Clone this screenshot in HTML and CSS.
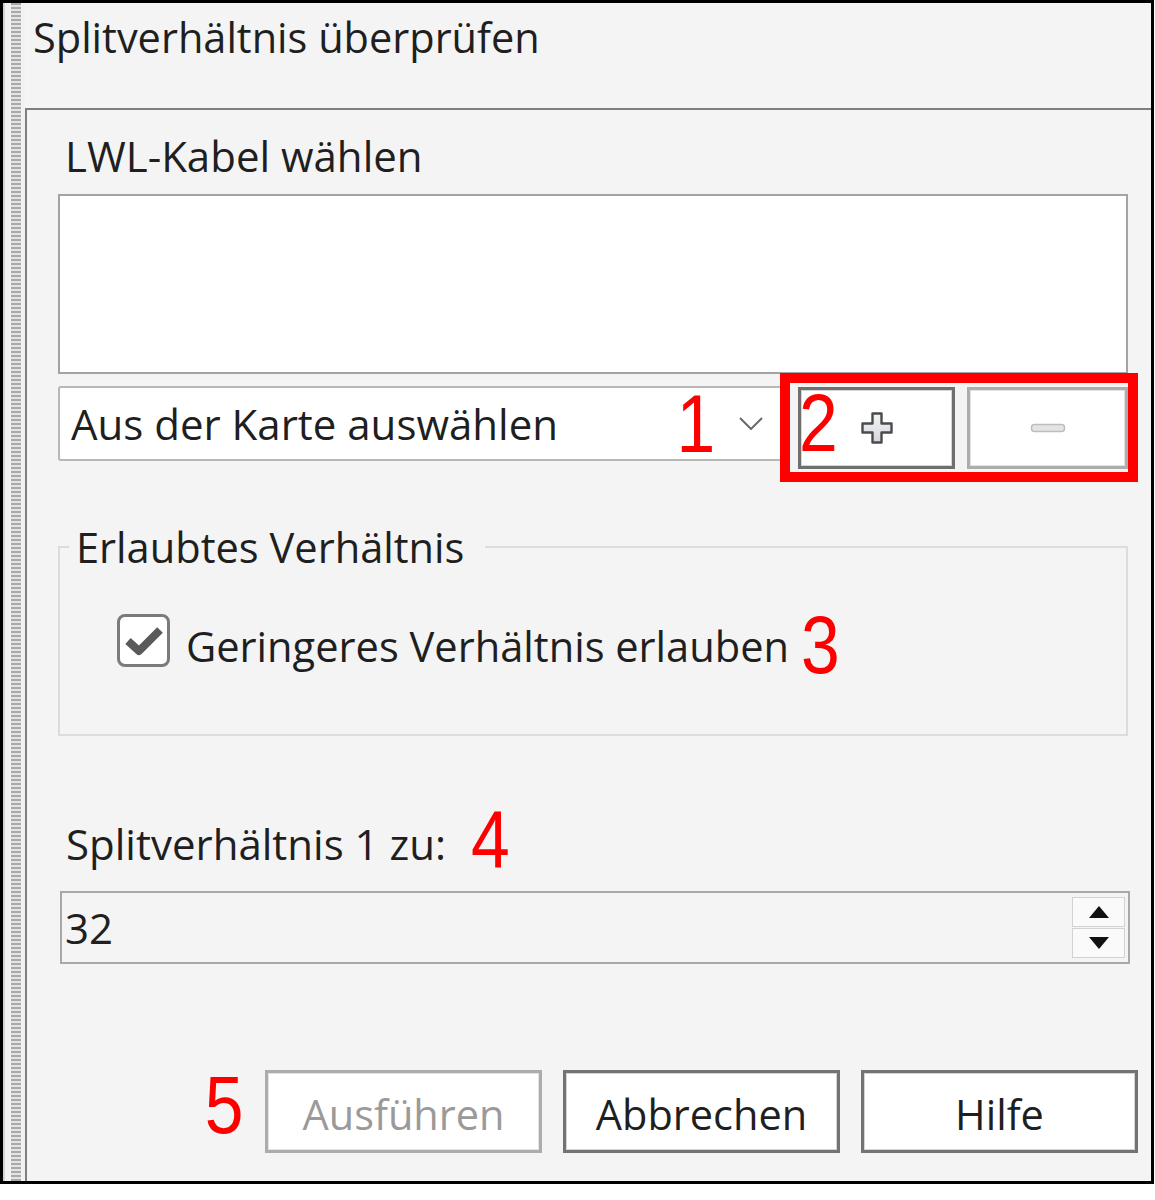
FILE: index.html
```html
<!DOCTYPE html>
<html lang="de">
<head>
    <meta charset="UTF-8">
    <title>Splitverhältnis überprüfen</title>
    <link rel="stylesheet" href="styles.css">
</head>
<body>

<div class="window">
    <div class="grip"></div>

    <div class="main">
        <div class="title">Splitverhältnis überprüfen</div>

        <div class="panel">
            <div class="field-label">LWL-Kabel wählen</div>
            <div class="listbox"></div>

            <div class="picker-row">
                <div class="dropdown">
                    <span class="dropdown-text">Aus der Karte auswählen</span>
                    <span class="marker marker-1">1</span>
                    <svg class="chevron" width="24" height="13" viewBox="0 0 24 13">
                        <polyline points="1,1 12,12 23,1" fill="none" stroke="#6a6a6a" stroke-width="2"/>
                    </svg>
                </div>

                <div class="tool-btn tool-btn-add">
                    <svg width="34" height="34" viewBox="0 0 34 34">
                        <defs>
                            <linearGradient id="plusFill" x1="0" y1="0" x2="0" y2="1">
                                <stop offset="0" stop-color="#f4f5f8"/>
                                <stop offset="1" stop-color="#d3d6dc"/>
                            </linearGradient>
                        </defs>
                        <path d="M12.5 2.5 h9 v10 h10 v9 h-10 v10 h-9 v-10 h-10 v-9 h10 z"
                              fill="url(#plusFill)" stroke="#4b4b4b" stroke-width="2.4" stroke-linejoin="round"/>
                    </svg>
                </div>

                <div class="tool-btn tool-btn-remove">
                    <svg width="36" height="10" viewBox="0 0 36 10">
                        <rect x="1.5" y="1.5" width="33" height="7" rx="3" fill="#e4e4e4" stroke="#bdbdbd" stroke-width="1.5"/>
                    </svg>
                </div>

                <span class="marker marker-2">2</span>
                <div class="callout"></div>
            </div>

            <fieldset class="group">
                <legend>Erlaubtes Verhältnis</legend>
                <div class="check-row">
                    <span class="checkbox">
                        <svg width="46" height="46" viewBox="0 0 46 46">
                            <polyline points="7,23 18,33 39,12" fill="none" stroke="#5a5a5a" stroke-width="8" stroke-linejoin="round"/>
                        </svg>
                    </span>
                    <span class="check-text">Geringeres Verhältnis erlauben</span>
                    <span class="marker marker-3">3</span>
                </div>
            </fieldset>

            <div class="field-label split-label">
                <span>Splitverhältnis 1 zu:</span>
                <span class="marker marker-4">4</span>
            </div>

            <div class="spin-box">
                <span class="spin-value">32</span>
                <div class="spinner">
                    <div class="spin-btn"><span class="arrow-up"></span></div>
                    <div class="spin-btn"><span class="arrow-down"></span></div>
                </div>
            </div>

            <div class="actions">
                <span class="marker marker-5">5</span>
                <button class="dlg-btn" disabled>Ausführen</button>
                <button class="dlg-btn">Abbrechen</button>
                <button class="dlg-btn">Hilfe</button>
            </div>
        </div>
    </div>
</div>

</body>
</html>
```

FILE: styles.css
```css
body {
    margin: 0;
    padding: 0;
    background: #fff;
    font-family: 'Open Sans', 'Noto Sans', sans-serif;
    color: #1f1f1f;
}

.window {
    display: flex;
    width: 1154px;
    border: 3px solid #000;
    box-sizing: border-box;
    background: #f4f4f4;
}

/* dotted drag handle on the left edge */
.grip {
    width: 20px;
    border-left: 2px solid #d2d2d2;
    background:
        repeating-linear-gradient(to bottom, #a9a9a9 0 2px, #e4e4e4 2px 4px) 6px 0 / 10px 100% no-repeat,
        #f2f2f2;
}

.main {
    flex: 1;
    display: flex;
    flex-direction: column;
}

.title {
    height: 105px;
    box-sizing: border-box;
    padding: 10px 0 0 8px;
    font-size: 41.5px;
    line-height: 48px;
}

.panel {
    border-top: 2px solid #7f7f7f;
    border-left: 2px solid #7f7f7f;
    padding: 21px 23px 28px 31px;
}

.field-label {
    font-size: 42px;
    line-height: 50px;
    height: 50px;
    padding-left: 7px;
}

.listbox {
    margin-top: 13px;
    height: 180px;
    background: #fff;
    border: 2px solid #a3a3a3;
    box-sizing: border-box;
}

.picker-row {
    position: relative;
    display: flex;
    align-items: flex-start;
    margin-top: 12px;
    height: 83px;
}

.dropdown {
    flex: 1;
    display: flex;
    align-items: center;
    height: 75px;
    padding-left: 11px;
    background: #fff;
    border: 2px solid #b7b7b7;
    border-radius: 3px;
    box-sizing: border-box;
    font-size: 42px;
    line-height: 50px;
}

.chevron {
    margin: 0 23px 0 20px;
}

.tool-btn {
    display: flex;
    align-items: center;
    justify-content: center;
    margin-top: 1px;
    height: 82px;
    background: #fff;
    box-sizing: border-box;
}

.tool-btn-add {
    width: 157px;
    margin-left: 10px;
    border: 3px solid #6f6f6f;
    box-shadow: inset 0 0 0 1px #d6d6d6;
}

.tool-btn-remove {
    width: 161px;
    margin-left: 12px;
    border: 3px solid #adadad;
    box-shadow: inset 0 0 0 1px #e2e2e2;
}

/* red numbered callouts, drawn a little condensed */
.marker {
    display: inline-block;
    font-family: 'Liberation Sans', Arial, sans-serif;
    font-size: 82px;
    line-height: 82px;
    color: #f00;
    transform: scaleX(0.85);
    transform-origin: left center;
}

.marker-1 {
    margin-left: auto;
    transform-origin: center;
}

.marker-2 {
    position: absolute;
    left: 741px;
    top: -4px;
}

.callout {
    position: absolute;
    left: 722px;
    top: -13px;
    width: 358px;
    height: 109px;
    border: 10px solid #f00;
    box-sizing: border-box;
}

.group {
    margin: 53px 0 0;
    padding: 0;
    min-width: 0;
    border: 2px solid #dcdcdc;
}

.group legend {
    margin-left: 9px;
    padding: 0 21px 0 7px;
    font-size: 41.6px;
    line-height: 50px;
}

.check-row {
    display: flex;
    align-items: flex-start;
    height: 52px;
    margin: 42px 0 68px 57px;
}

.checkbox {
    display: flex;
    align-items: center;
    justify-content: center;
    width: 53px;
    height: 53px;
    background: #fff;
    border: 3px solid #7b7b7b;
    border-radius: 8px;
    box-sizing: border-box;
}

.check-text {
    margin: 7px 0 0 16px;
    font-size: 41.6px;
    line-height: 50px;
}

.marker-3 {
    margin: -10px 0 0 12px;
}

.split-label {
    display: flex;
    align-items: flex-start;
    margin-top: 83px;
    padding-left: 8px;
}

.marker-4 {
    margin: -20px 0 0 25px;
}

.spin-box {
    display: flex;
    align-items: center;
    height: 73px;
    margin: 22px -2px 0 2px;
    border: 2px solid #a8a8a8;
    box-sizing: border-box;
    background: #f4f4f4;
}

.spin-value {
    flex: 1;
    padding-left: 3px;
    font-size: 42px;
    line-height: 50px;
}

.spinner {
    display: flex;
    flex-direction: column;
    gap: 1px;
    width: 53px;
    margin-right: 3px;
}

.spin-btn {
    display: flex;
    align-items: center;
    justify-content: center;
    height: 30px;
    background: #fafafa;
    border: 1px solid #d2d2d2;
    box-sizing: border-box;
}

.arrow-up {
    border-left: 10px solid transparent;
    border-right: 10px solid transparent;
    border-bottom: 12px solid #111;
}

.arrow-down {
    border-left: 10px solid transparent;
    border-right: 10px solid transparent;
    border-top: 12px solid #111;
}

.actions {
    display: flex;
    justify-content: flex-end;
    gap: 21px;
    margin: 106px -10px 0 0;
    height: 83px;
}

.marker-5 {
    margin-top: -6px;
    transform-origin: right center;
}

.dlg-btn {
    width: 277px;
    height: 83px;
    padding: 5px 0 0;
    background: #fff;
    border: 3px solid #737373;
    box-shadow: inset 0 0 0 1px #d4d4d4;
    font-family: 'Open Sans', 'Noto Sans', sans-serif;
    font-size: 41.5px;
    line-height: 50px;
    color: #1f1f1f;
}

.dlg-btn:disabled {
    border-color: #acacac;
    box-shadow: inset 0 0 0 1px #e4e4e4;
    color: #9a9a9a;
}
```
